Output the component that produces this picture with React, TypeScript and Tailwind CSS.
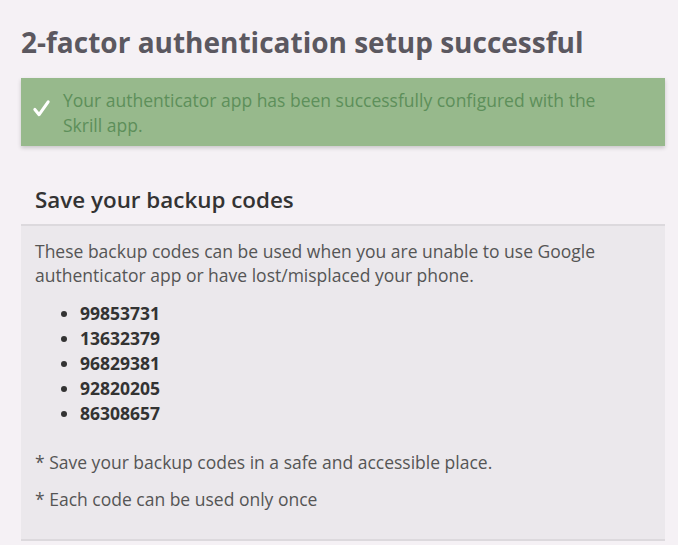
import React from 'react';

const codes = ['99853731', '13632379', '96829381', '92820205', '86308657'];

const App = () => {
    return (
        <div className="min-h-[545px] bg-[#f5f1f5] pl-[21px] pr-[13px] pt-[24px] font-['Open_Sans',sans-serif] text-[#555]">
            <h1 className="text-[28px] font-bold leading-[36px] text-[#5b5860]">2-factor authentication setup successful</h1>

            <div className="mt-[18px] flex items-start bg-[#97b98c] pt-[10px] pb-[8px] pl-[11px] pr-[60px] shadow-[0_2px_4px_rgba(0,0,0,0.18)]">
                <svg viewBox="0 0 20 20" className="mt-[11px] h-[19px] w-[19px] shrink-0" fill="none" stroke="#ffffff" strokeWidth="3.2" strokeLinecap="round" strokeLinejoin="round">
                    <path d="M3 11l4.5 5.5L17 3" />
                </svg>
                <p className="ml-[12px] text-[17.5px] leading-[25px] text-[#5d8f5a]">
                    Your authenticator app has been successfully configured with the Skrill app.
                </p>
            </div>

            <div className="mt-[39px]">
                <h2 className="px-[14px] pb-[9px] text-[22.4px] font-semibold leading-[30px] text-[#333]">Save your backup codes</h2>
                <div className="border-t-2 border-b-2 border-[#dcd9dd] bg-[#ebe8ec] px-[14px] pt-[13px] pb-[28px] text-[17.5px] leading-[24px] text-[#555]">
                    <p>These backup codes can be used when you are unable to use Google authenticator app or have lost/misplaced your phone.</p>
                    <ul className="mt-[14px] list-disc pl-[45px] font-bold text-[#333]">
                        {codes.map(code => (
                            <li key={code} className="leading-[25px]">{code}</li>
                        ))}
                    </ul>
                    <p className="mt-[24px]">* Save your backup codes in a safe and accessible place.</p>
                    <p className="mt-[13px]">* Each code can be used only once</p>
                </div>
            </div>
        </div>
    );
};

export default App;
